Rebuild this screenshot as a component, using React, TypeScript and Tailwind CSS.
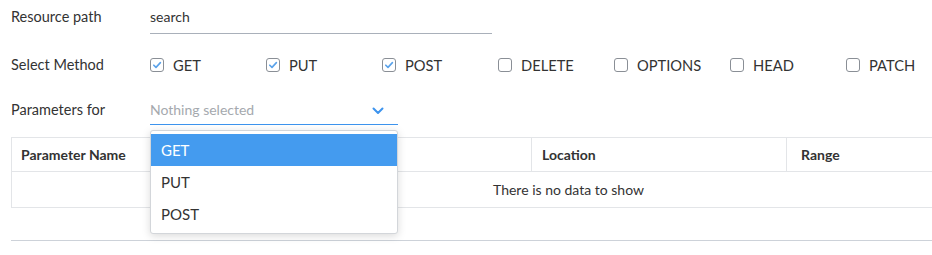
import React from 'react'

const methods = [
  { name: 'GET', checked: true },
  { name: 'PUT', checked: true },
  { name: 'POST', checked: true },
  { name: 'DELETE', checked: false },
  { name: 'OPTIONS', checked: false },
  { name: 'HEAD', checked: false },
  { name: 'PATCH', checked: false },
]

function Checkbox({ checked }: { checked: boolean }) {
  return (
    <span className="w-[14px] h-[14px] shrink-0 rounded-[3px] border border-[#8a8f96] bg-white flex items-center justify-center">
      {checked && (
        <svg width="10" height="10" viewBox="0 0 10 10" fill="none">
          <path d="M1.8 5.2 L4 7.4 L8.4 2.6" stroke="#5aa2ea" strokeWidth="1.6" strokeLinecap="round" strokeLinejoin="round" />
        </svg>
      )}
    </span>
  )
}

export default function App() {
  return (
    <div className="relative w-[932px] h-[255px] overflow-hidden bg-white text-[#333] font-['Lato','Noto_Sans',sans-serif]">
      <div className="flex h-[34px] items-center pl-[11px]">
        <div className="w-[139px] shrink-0 text-[14.5px]">Resource path</div>
        <div className="w-[342px] h-[34px] flex items-center border-b border-[#a9b0ba] text-[14px]">search</div>
      </div>

      <div className="flex h-[30px] mt-[16px] items-center pl-[11px]">
        <div className="w-[139px] shrink-0 text-[14.5px]">Select Method</div>
        <div className="flex shrink-0">
          {methods.map((m) => (
            <label key={m.name} className="w-[116px] shrink-0 flex items-center gap-[9px] text-[14.7px]">
              <Checkbox checked={m.checked} />
              <span>{m.name}</span>
            </label>
          ))}
        </div>
      </div>

      <div className="flex h-[31px] mt-[14px] items-center pl-[11px]">
        <div className="w-[139px] shrink-0 text-[14.5px]">Parameters for</div>
        <div className="w-[248px] h-[31px] flex items-center justify-between border-b border-[#3d94ee] text-[14px] text-[#a5a9ae] pr-[14px]">
          <span>Nothing selected</span>
          <svg width="12" height="8" viewBox="0 0 12 8" fill="none" className="mt-[3px]">
            <path d="M1.5 1.5 L6 6 L10.5 1.5" stroke="#3d94ee" strokeWidth="2" strokeLinecap="round" strokeLinejoin="round" />
          </svg>
        </div>
      </div>

      <div className="mt-[12px] ml-[11px] w-[1114px]">
        <div className="flex h-[34px] border-t border-l border-[#e3e5e8] text-[14px] font-bold">
          <div className="w-[264px] flex items-center pl-[9px]">Parameter Name</div>
          <div className="w-[255px] flex items-center pl-[11px] border-l border-[#e3e5e8]">Type</div>
          <div className="w-[255px] flex items-center pl-[10px] border-l border-[#e3e5e8]">Location</div>
          <div className="w-[255px] flex items-center pl-[14px] border-l border-[#e3e5e8]">Range</div>
          <div className="flex-1 border-l border-[#e3e5e8]" />
        </div>
        <div className="h-[37px] flex items-center justify-center border-t border-b border-l border-[#e3e5e8] text-[14px]">
          There is no data to show
        </div>
      </div>

      <div className="mt-[32px] ml-[11px] border-t border-[#cdd2d9]" />

      <div className="absolute left-[150px] top-[130px] w-[248px] h-[104px] bg-white border border-[#d3d6da] rounded-[3px] shadow-[0_2px_8px_rgba(0,0,0,0.15)] py-[3px] text-[15px]">
        <div className="h-[32px] flex items-center pl-[10px] bg-[#449bef] text-white">GET</div>
        <div className="h-[32px] flex items-center pl-[10px]">PUT</div>
        <div className="h-[32px] flex items-center pl-[10px]">POST</div>
      </div>
    </div>
  )
}
